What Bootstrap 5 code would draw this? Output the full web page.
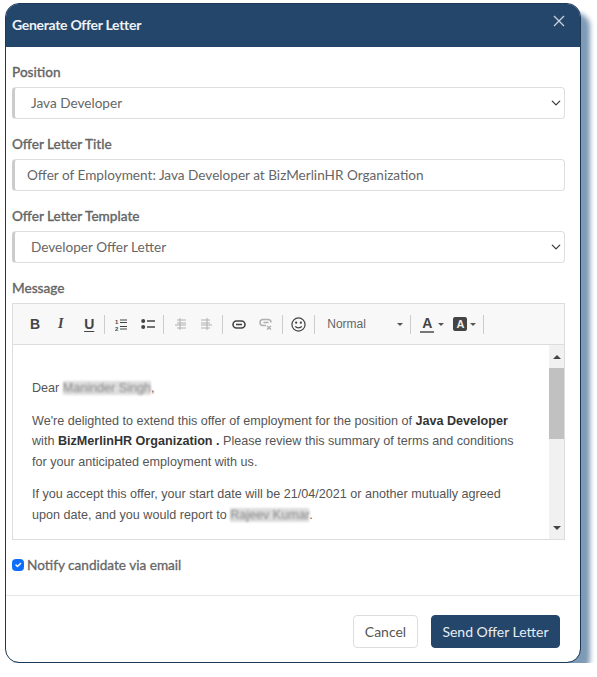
<!DOCTYPE html>
<html lang="en">

<head>
  <meta charset="UTF-8">
  <meta name="viewport" content="width=device-width, initial-scale=1.0">
  <title>Generate Offer Letter</title>
  <link href="https://cdn.jsdelivr.net/npm/bootstrap@5.3.0/dist/css/bootstrap.min.css" rel="stylesheet">
  <style>
    body {
      font-family: Lato, "Liberation Sans", sans-serif;
      background: #fff;
      color: #666;
    }

    .offer-wrap {
      --bs-modal-width: 576px;
      padding: 3px 0 0 5px;
    }

    /* the blue shadow behind the dialog */
    .offer-shade::before {
      content: "";
      position: absolute;
      top: 10px;
      left: 10px;
      right: -9px;
      bottom: -10px;
      z-index: -1;
      border-radius: 14px;
      background: #7f9ab5;
      filter: blur(2.5px);
    }

    .offer-box {
      --bs-modal-bg: #fff;
      height: 660px;
      border: 1px solid #1c3a57;
      border-left-width: 1.5px;
      border-radius: 14px;
      overflow: hidden;
    }

    .offer-head {
      height: 43px;
      padding: 0 14px 0 6px;
      background: #24466b;
      color: #eef2f6;
      border: 0;
      align-items: flex-start;
      flex-shrink: 0;
    }

    .offer-head h5 {
      margin: 12px 0 0;
      font-size: 14px;
      font-weight: 700;
      line-height: 17px;
      letter-spacing: -.3px;
    }

    .offer-x {
      margin-top: 10px;
      width: 14px;
      height: 14px;
      display: block;
    }

    .offer-body {
      padding: 17px 15px 0 6px;
      flex: 0 0 auto;
    }

    .offer-label {
      display: block;
      margin: 0 0 6px;
      font-size: 13.6px;
      line-height: 17px;
      font-weight: 500;
      color: #666;
      -webkit-text-stroke: .3px #666;
    }

    .offer-field {
      height: 32px;
      margin-bottom: 17px;
      padding: 0 32px 0 16px;
      font-size: 13.6px;
      line-height: 30px;
      color: #666;
      border: 1px solid #dedede;
      border-left: 3px solid #ccc;
      border-radius: 4px;
      background-size: 12px 10px;
      background-position: right 2px center;
    }

    .offer-title {
      padding-left: 12px;
    }

    .offer-editor {
      height: 237px;
      border: 1px solid #ddd;
      margin-bottom: 17px;
    }

    .offer-tools {
      height: 41px;
      padding: 0 0 0 17px;
      background: #f8f8f8;
      border-bottom: 1px solid #ddd;
      color: #444;
    }

    .tool-txt {
      font-family: "Liberation Sans", sans-serif;
      font-weight: 700;
      font-size: 14px;
      line-height: 1;
      color: #444;
    }

    .tool-i {
      font-family: "Liberation Serif", serif;
      font-style: italic;
      width: 9px;
      text-align: center;
    }

    .tool-u {
      text-decoration: underline;
      text-underline-offset: 2px;
    }

    .tool-sep {
      width: 1px;
      height: 19px;
      background: #ccc;
    }

    .tool-ico {
      display: block;
      flex-shrink: 0;
    }

    .tool-ico text {
      font-family: "Liberation Sans", sans-serif;
      font-size: 6px;
      font-weight: 700;
      fill: #444;
      stroke: none;
    }

    .tool-fade {
      opacity: .4;
    }

    .tool-normal {
      width: 70px;
      font-family: "Liberation Sans", sans-serif;
      font-size: 12px;
      color: #666;
    }

    .tool-caret {
      width: 0;
      height: 0;
      border-left: 3px solid transparent;
      border-right: 3px solid transparent;
      border-top: 3px solid #555;
    }

    .tool-a {
      font-family: "Liberation Sans", sans-serif;
      font-weight: 700;
      font-size: 14px;
      line-height: 14px;
      color: #444;
      border-bottom: 2px solid #777;
      padding: 0 2px 1px;
    }

    .tool-ab {
      width: 14px;
      height: 14px;
      font-family: "Liberation Sans", sans-serif;
      font-weight: 700;
      font-size: 11px;
      line-height: 14px;
      text-align: center;
      color: #eee;
      background: #444;
      border-radius: 2px;
    }

    /* toolbar spacing, the steps between the buttons are uneven */
    .tl-3 { margin-left: 3px; }
    .tl-4 { margin-left: 4px; }
    .tl-7 { margin-left: 7px; }
    .tl-8 { margin-left: 8px; }
    .tl-9 { margin-left: 9px; }
    .tl-10 { margin-left: 10px; }
    .tl-12 { margin-left: 12px; }
    .tl-13 { margin-left: 13px; }
    .tl-14 { margin-left: 14px; }
    .tl-16 { margin-left: 16px; }
    .tl-19 { margin-left: 19px; }

    .offer-text {
      flex: 1;
      min-width: 0;
      padding: 33px 24px 0 19px;
      font-family: "Liberation Sans", sans-serif;
      font-size: 12.6px;
      line-height: 20.5px;
      color: #555;
      overflow: hidden;
    }

    .offer-text p {
      margin: 0 0 12px;
    }

    .offer-text b {
      color: #333;
    }

    .blur-name {
      color: #888;
      background: #ddd;
      filter: blur(1.3px);
    }

    .offer-scroll {
      width: 15px;
      flex-shrink: 0;
      background: #f1f1f1;
    }

    .scroll-btn {
      height: 23px;
      flex-shrink: 0;
    }

    .scroll-up {
      border-left: 4px solid transparent;
      border-right: 4px solid transparent;
      border-bottom: 4px solid #444;
    }

    .scroll-down {
      border-left: 4px solid transparent;
      border-right: 4px solid transparent;
      border-top: 4px solid #444;
    }

    .scroll-thumb {
      height: 71px;
      background: #c1c1c1;
    }

    .offer-check {
      min-height: 0;
      margin: 0 0 21px;
      padding-left: 15px;
      font-size: 13.6px;
      line-height: 17px;
      color: #666;
      -webkit-text-stroke: .3px #666;
    }

    .offer-check .form-check-input {
      width: 12px;
      height: 12px;
      margin: 2px 0 0 -15px;
    }

    .offer-foot {
      padding: 19px 20px 0 0;
      border-top: 1px solid #e6e6e6;
      gap: 13px;
      flex-shrink: 0;
    }

    .offer-btn {
      height: 33px;
      margin: 0;
      padding: 0;
      font-size: 14px;
      line-height: 31px;
      border-radius: 4px;
    }

    .offer-cancel {
      width: 65px;
      color: #555;
      background: #fff;
      border: 1px solid #ddd;
    }

    .offer-send {
      width: 129px;
      color: #e8edf2;
      background: #24466b;
      border: 1px solid #24466b;
    }
  </style>
</head>

<body>
  <div class="modal d-block position-static overflow-visible h-auto offer-wrap">
    <div class="modal-dialog m-0 offer-shade">
      <div class="modal-content offer-box">
        <div class="modal-header offer-head justify-content-between">
          <h5 class="modal-title">Generate Offer Letter</h5>
          <svg class="offer-x" viewBox="0 0 14 14" fill="none" stroke="#c9d3de" stroke-width="1.3">
            <path d="M2 2 12 12M12 2 2 12"/>
          </svg>
        </div>

        <div class="modal-body offer-body">
          <label class="offer-label">Position</label>
          <select class="form-select offer-field">
            <option>Java Developer</option>
          </select>

          <label class="offer-label">Offer Letter Title</label>
          <input type="text" class="form-control offer-field offer-title" value="Offer of Employment: Java Developer at BizMerlinHR Organization">

          <label class="offer-label">Offer Letter Template</label>
          <select class="form-select offer-field">
            <option>Developer Offer Letter</option>
          </select>

          <label class="offer-label">Message</label>
          <div class="offer-editor d-flex flex-column">
            <div class="offer-tools d-flex align-items-center flex-shrink-0">
              <span class="tool-txt">B</span>
              <span class="tool-txt tool-i tl-16">I</span>
              <span class="tool-txt tool-u tl-19">U</span>
              <span class="tool-sep tl-10"></span>
              <svg class="tool-ico tl-10" width="12" height="13" viewBox="0 0 12 13" fill="none" stroke="#444" stroke-width="1">
                <text x="0" y="6">1</text>
                <text x="0" y="12.500">2</text>
                <path d="M5 2h7M5 4.500h7M5 8.500h7M5 11h7"/>
              </svg>
              <svg class="tool-ico tl-14" width="14" height="12" viewBox="0 0 14 12" fill="none" stroke="#444" stroke-width="1.400">
                <circle cx="2.200" cy="3" r="2" fill="#444" stroke="none"/>
                <circle cx="2.200" cy="9" r="2" fill="#444" stroke="none"/>
                <path d="M6 3h8M6 9h8"/>
              </svg>
              <span class="tool-sep tl-8"></span>
              <svg class="tool-ico tool-fade tl-9" width="14" height="14" viewBox="0 0 14 14" fill="none" stroke="#444" stroke-width="1">
                <path d="M7 1v12M4 3h9M4 6h9M2 8h11M4 11h9"/>
              </svg>
              <svg class="tool-ico tool-fade tl-13" width="14" height="14" viewBox="0 0 14 14" fill="none" stroke="#444" stroke-width="1">
                <path d="M7 1v12M1 3h9M1 6h9M1 8h11M1 11h9"/>
              </svg>
              <span class="tool-sep tl-8"></span>
              <svg class="tool-ico tl-9" width="14" height="9" viewBox="0 0 14 9" fill="none" stroke="#444" stroke-width="1.600">
                <rect x="1" y="1" width="12" height="7" rx="3.500"/>
                <path d="M4 4.500h6"/>
              </svg>
              <svg class="tool-ico tool-fade tl-13" width="14" height="12" viewBox="0 0 14 12" fill="none" stroke="#444" stroke-width="1.500">
                <path d="M7 7.500H4a3 3 0 0 1 0-6h5a3 3 0 0 1 3 3M4.500 4.500h5M8 8l4 3.500M12 8l-4 3.500"/>
              </svg>
              <span class="tool-sep tl-9"></span>
              <svg class="tool-ico tl-8" width="15" height="15" viewBox="0 0 16 16" fill="none" stroke="#444" stroke-width="1.300">
                <circle cx="8" cy="8" r="7"/>
                <circle cx="5.500" cy="6" r="1.200" fill="#444" stroke="none"/>
                <circle cx="10.500" cy="6" r="1.200" fill="#444" stroke="none"/>
                <path d="M4.500 10c1.500 2 5.500 2 7 0"/>
              </svg>
              <span class="tool-sep tl-8"></span>
              <span class="tool-normal tl-12">Normal</span>
              <span class="tool-caret"></span>
              <span class="tool-sep tl-7"></span>
              <span class="tool-a tl-9">A</span>
              <span class="tool-caret tl-4"></span>
              <span class="tool-ab tl-9">A</span>
              <span class="tool-caret tl-3"></span>
              <span class="tool-sep tl-7"></span>
            </div>
            <div class="d-flex flex-grow-1 overflow-hidden">
              <div class="offer-text">
                <p>Dear <span class="blur-name">Maninder Singh</span>,</p>
                <p>We're delighted to extend this offer of employment for the position of <b>Java Developer</b> with <b>BizMerlinHR Organization .</b> Please review this summary of terms and conditions for your anticipated employment with us.</p>
                <p>If you accept this offer, your start date will be 21/04/2021 or another mutually agreed upon date, and you would report to <span class="blur-name">Rajeev Kumar</span>.</p>
              </div>
              <div class="offer-scroll d-flex flex-column align-items-center">
                <div class="scroll-btn d-flex align-items-center"><span class="scroll-up"></span></div>
                <div class="scroll-thumb w-100"></div>
                <div class="flex-grow-1"></div>
                <div class="scroll-btn d-flex align-items-center"><span class="scroll-down"></span></div>
              </div>
            </div>
          </div>

          <div class="form-check offer-check">
            <input class="form-check-input" type="checkbox" id="notifyCheck" checked>
            <label class="form-check-label" for="notifyCheck">Notify candidate via email</label>
          </div>
        </div>

        <div class="modal-footer offer-foot justify-content-end">
          <button type="button" class="btn offer-btn offer-cancel">Cancel</button>
          <button type="button" class="btn offer-btn offer-send">Send Offer Letter</button>
        </div>
      </div>
    </div>
  </div>

  <script src="https://cdn.jsdelivr.net/npm/bootstrap@5.3.0/dist/js/bootstrap.bundle.min.js"></script>
</body>

</html>
